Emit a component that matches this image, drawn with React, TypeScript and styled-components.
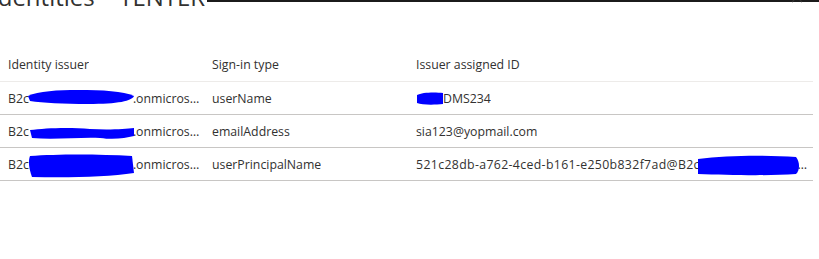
import React from "react";
import styled, { createGlobalStyle } from "styled-components";

const Global = createGlobalStyle`
  html, body { margin: 0; padding: 0; background: #ffffff; }
  body { font-family: "Open Sans", "Noto Sans", sans-serif; color: #323130; overflow: hidden; }
`;

const Page = styled.div`
  width: 819px;
  height: 259px;
  background: #fff;
  position: relative;
  overflow: hidden;
`;

const TitleBar = styled.div`
  display: flex;
  align-items: flex-start;
  height: 55px;
  margin-top: -15px;
`;

const Title = styled.h1`
  margin: 0 0 0 -9px;
  font-size: 24px;
  font-weight: 400;
  line-height: 24px;
  color: #323130;
  white-space: nowrap;
  background: #fff;
  padding-right: 2px;
`;

const TopRule = styled.div`
  flex: 1;
  height: 2px;
  margin-top: 15px;
  background: #1b1b1b;
`;

const Close = styled.svg`
  position: absolute;
  top: -9px;
  left: 791px;
`;

const Table = styled.div`
  width: 813px;
  display: flex;
  flex-direction: column;
`;

const HeaderRow = styled.div`
  display: grid;
  grid-template-columns: 204px 204px 405px;
  height: 42px;
  box-sizing: border-box;
  padding-top: 8px;
  border-bottom: 1px solid #edebe9;
`;

const Row = styled.div`
  display: grid;
  grid-template-columns: 204px 204px 405px;
  height: 33px;
  box-sizing: border-box;
  border-bottom: 1px solid #c8c6c4;
`;

const Cell = styled.div<{ $wide?: boolean }>`
  position: relative;
  height: 100%;
  display: flex;
  align-items: center;
  padding: 0 0 0 8px;
  font-size: 12.3px;
  font-weight: 400;
  letter-spacing: ${(p) => (p.$wide ? "0.35px" : "0")};
  color: #323130;
  min-width: 0;
  box-sizing: border-box;
`;

const Text = styled.span`
  white-space: nowrap;
  overflow: hidden;
  text-overflow: ellipsis;
  min-width: 0;
`;

const Mask = styled.span<{ $w: number }>`
  display: inline-block;
  width: ${(p) => p.$w}px;
  height: 1em;
  vertical-align: middle;
`;

const Scribble = styled.svg`
  position: absolute;
  pointer-events: none;
`;

type Blob = { left: number; top: number; w: number; h: number; d: string };

const Redact = ({ b }: { b: Blob }) => (
  <Scribble
    width={b.w}
    height={b.h}
    viewBox={`0 0 ${b.w} ${b.h}`}
    style={{ left: b.left, top: b.top }}
  >
    <path d={b.d} fill="#0000ff" />
  </Scribble>
);

type Part = string | { mask: number };
type CellData = { parts: Part[]; blob?: Blob; wide?: boolean };

const rows: CellData[][] = [
  [
    {
      parts: ["B2c", { mask: 104 }, ".onmicrosoft.com"],
      blob: { left: 28, top: 6, w: 106, h: 18, d: "M0 8 C10 3 30 2 50 2 C75 2 95 3 106 8 C104 13 90 16 60 16 C35 16 15 15 2 13 Z" },
    },
    { parts: ["userName"] },
    {
      parts: [{ mask: 27 }, "DMS234"],
      blob: { left: 8, top: 10, w: 28, h: 13, d: "M1 3 C6 0 20 0 27 1 L27 12 C18 13 6 13 1 11 Z" },
    },
  ],
  [
    {
      parts: ["B2c", { mask: 104 }, ".onmicrosoft.com"],
      blob: { left: 30, top: 9, w: 104, h: 17, d: "M0 6 C15 4 40 3 60 5 C80 6 95 5 104 4 L104 12 C95 14 85 16 70 14 C50 13 25 16 2 14 Z" },
    },
    { parts: ["emailAddress"] },
    { parts: ["sia123@yopmail.com"] },
  ],
  [
    {
      parts: ["B2c", { mask: 104 }, ".onmicrosoft.com"],
      blob: { left: 28, top: 3, w: 106, h: 27, d: "M2 5 C30 3 70 3 104 5 L106 22 C80 26 40 27 4 26 C1 18 0 10 2 5 Z" },
    },
    { parts: ["userPrincipalName"] },
    {
      parts: ["521c28db-a762-4ced-b161-e250b832f7ad@B2c", { mask: 94 }, ".onmicrosoft.com"],
      wide: true,
      blob: { left: 290, top: 6, w: 102, h: 22, d: "M0 5 C30 1 70 1 98 3 C102 8 102 16 98 20 C70 22 30 21 0 20 Z" },
    },
  ],
];

const headers = ["Identity issuer", "Sign-in type", "Issuer assigned ID"];

export default function App() {
  return (
    <Page>
      <Global />
      <TitleBar>
        <Title>Identities – TENTER</Title>
        <TopRule />
      </TitleBar>
      <Close width="12" height="12" viewBox="0 0 12 12">
        <path d="M1 1 L11 11 M11 1 L1 11" stroke="#323130" strokeWidth="1.1" />
      </Close>
      <Table>
        <HeaderRow>
          {headers.map((h) => (
            <Cell key={h}>
              <Text>{h}</Text>
            </Cell>
          ))}
        </HeaderRow>
        {rows.map((r, i) => (
          <Row key={i}>
            {r.map((c, j) => (
              <Cell key={j} $wide={c.wide}>
                <Text>
                  {c.parts.map((p, k) =>
                    typeof p === "string" ? (
                      <React.Fragment key={k}>{p}</React.Fragment>
                    ) : (
                      <Mask key={k} $w={p.mask} />
                    )
                  )}
                </Text>
                {c.blob && <Redact b={c.blob} />}
              </Cell>
            ))}
          </Row>
        ))}
      </Table>
    </Page>
  );
}
